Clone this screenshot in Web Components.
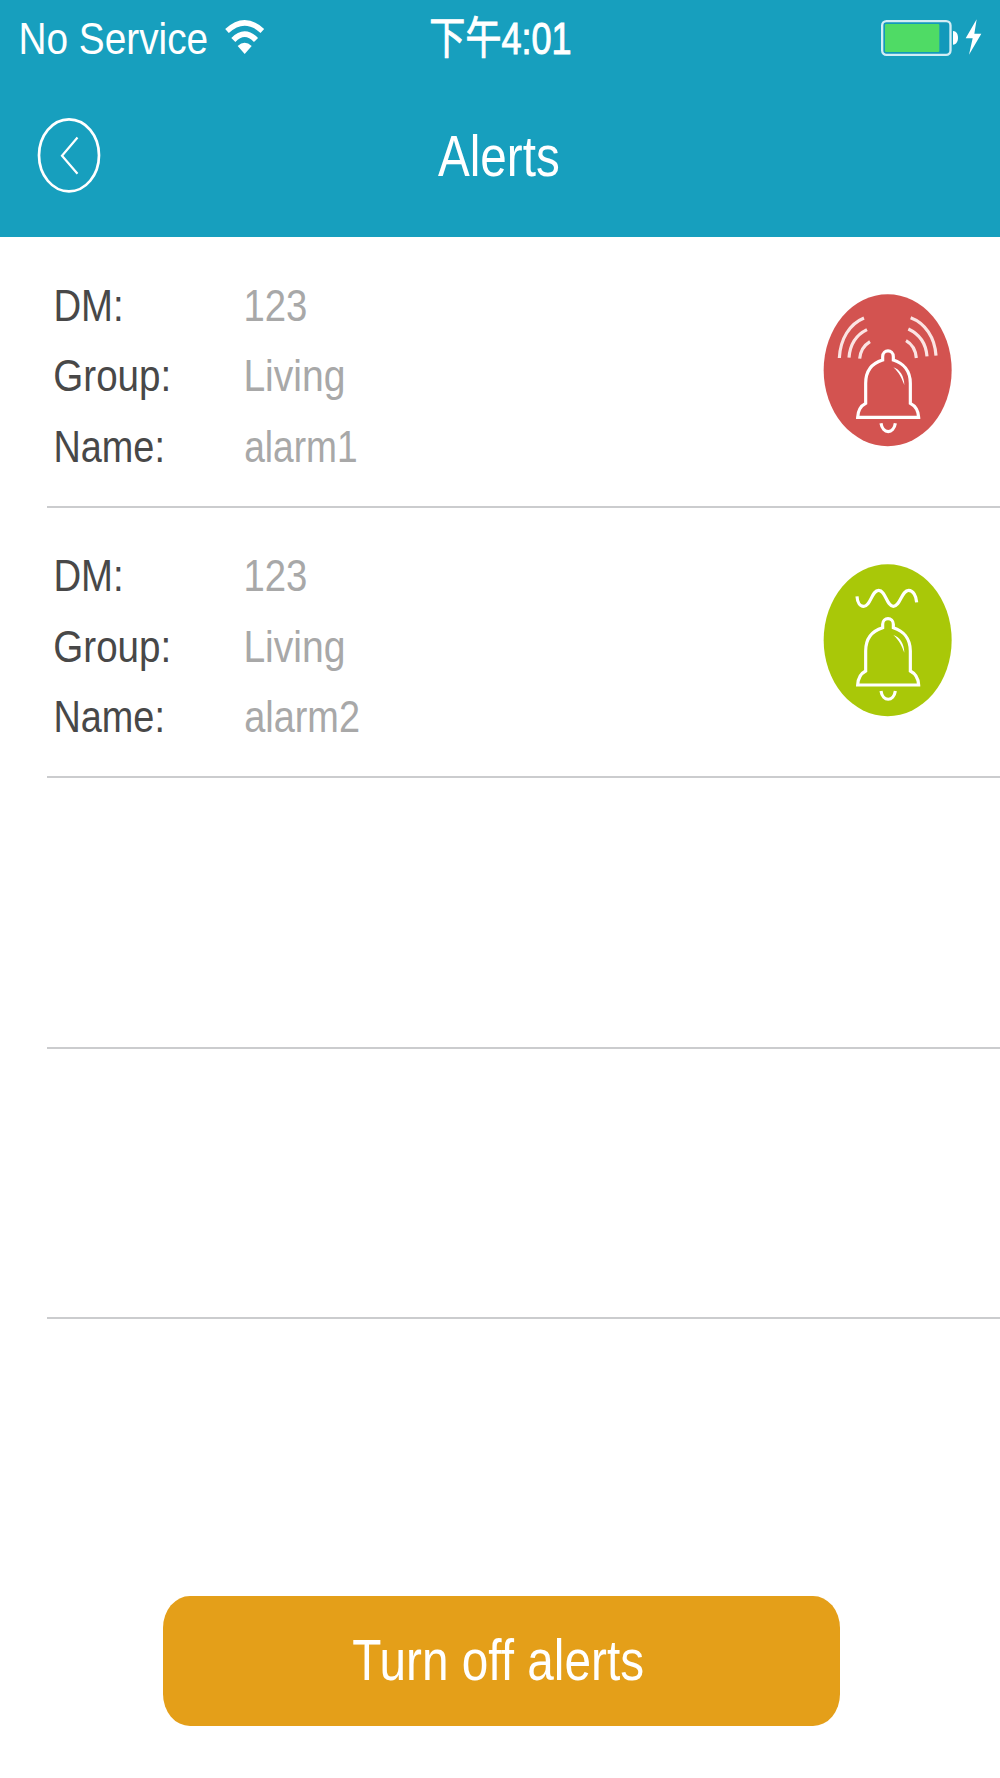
<!DOCTYPE html>
<html lang="en">
<head>
<meta charset="utf-8">
<title>Alerts</title>
<style>
html, body { margin: 0; background: #fff; }
body { font-family: "Liberation Sans", "Noto Sans CJK SC", sans-serif; }
</style>
</head>
<body>
<alerts-screen></alerts-screen>
<script>
const define = (name, html, setup) => {
  const t = document.createElement('template');
  t.innerHTML = html;
  customElements.define(name, class extends HTMLElement {
    connectedCallback() {
      if (this.shadowRoot) return;
      const root = this.attachShadow({ mode: 'open' });
      root.append(t.content.cloneNode(true));
      if (setup) setup(this, root);
    }
  });
};

/* Condensed label: squeezes its glyphs so that their ink spans `ink` pixels. */
const ctx = document.createElement('canvas').getContext('2d');
define('narrow-text', `
<style>
:host { display: flex; flex: none; }
span { display: block; flex: none; white-space: pre; transform-origin: 0 0; }
</style><span></span>`, (el, root) => {
  const span = root.querySelector('span');
  const text = el.getAttribute('text');
  const ink = +el.getAttribute('ink');
  span.textContent = text;
  const cs = getComputedStyle(el);
  ctx.font = `${cs.fontWeight} ${cs.fontSize} ${cs.fontFamily}`;
  const m = ctx.measureText(text);
  const k = ink / (m.actualBoundingBoxLeft + m.actualBoundingBoxRight);
  el.style.width = ink + 'px';
  span.style.transform = `translateX(${m.actualBoundingBoxLeft * k}px) scaleX(${k})`;
});

define('wifi-icon', `
<style>:host{display:block} svg{display:block}</style>
<svg width="40" height="36" viewBox="675 57 120 108" fill="none" stroke="#fff">
<path d="M681 93Q734 44 787 93" stroke-width="16"/>
<path d="M700 120Q734 85 768 120" stroke-width="17"/>
<path d="M713 138Q734 118 755 138L734 162Z" fill="#fff" stroke="none"/>
</svg>`);

define('battery-icon', `
<style>:host{display:block} svg{display:block}</style>
<svg width="105" height="40" viewBox="60 54 315 120">
<rect x="66.5" y="63.5" width="205" height="101" rx="13" fill="#1299bb" stroke="#d3edf5" stroke-width="7"/>
<rect x="75" y="72" width="163" height="84" rx="3" fill="#4fdb65"/>
<path d="M279 93C289 93 294 102 294 113.500S289 134 279 134Z" fill="#fff"/>
<path d="M350 58L317 115H338L327 164L364 101H343Z" fill="#fff"/>
</svg>`);

define('status-bar', `
<style>
:host { display: flex; height: 75px; line-height: 77px; font-size: 44.7px; color: #fff; }
.left, .right { flex: 1; display: flex; align-items: flex-start; }
.left { flex: 0 0 430.7px; box-sizing: border-box; padding-left: 21.3px; gap: 18.7px; }
.right { justify-content: flex-end; padding-right: 15px; }
wifi-icon { margin-top: 19px; } battery-icon { margin-top: 18px; }
.time { font-size: 44px; line-height: 78px; -webkit-text-stroke: 1px #fff; }
</style>
<div class="left"><narrow-text text="No Service" ink="185.5"></narrow-text><wifi-icon></wifi-icon></div>
<narrow-text class="time" text="下午4:01" ink="139.3"></narrow-text>
<div class="right"><battery-icon></battery-icon></div>`);

define('back-button', `
<style>:host{display:block} svg{display:block}</style>
<svg width="64" height="76" viewBox="0 0 64 76" fill="none" stroke="#fff">
<ellipse cx="32" cy="38.300" rx="30" ry="36" stroke-width="2.700"/>
<path d="M40.500 20.500L25 38.800L40.500 56.800" stroke-width="2.200"/>
</svg>`);

define('nav-bar', `
<style>
:host { display: flex; height: 162px; font-size: 56.5px; line-height: 163px; color: #fff; }
.side { flex: 1; padding: 42px 0 0 36.7px; }
.end { flex: 1; padding-left: 39.3px; }
</style>
<div class="side"><back-button></back-button></div>
<slot></slot>
<div class="end"></div>`);

const BELL = `
<path d="M143 412H326C325 393 315 377 301 370V310C301 272 279 249 250 240V230C250 207 218 207 218 230V240C188 249 167 272 167 310V370C153 377 144 393 143 412Z"/>
<path d="M213 430C218 463 251 463 256 430"/>
<path d="M250 262C269 267 283 290 283 315C276 297 268 278 250 262Z" fill="#fff" stroke="none"/>`;

define('alarm-badge', `
<style>:host{display:block} svg{display:block}</style>
<svg width="155" height="180" viewBox="0 0 465 540" fill="none" stroke="#fff" stroke-width="9.500"></svg>`, (el, root) => {
  const ringing = el.getAttribute('state') === 'ringing';
  root.querySelector('svg').innerHTML = `
<ellipse cx="233" cy="270.500" rx="192" ry="228" fill="${ringing ? '#d35350' : '#a9c808'}" stroke="none"/>` + (ringing ? `
<g stroke="#fbe4e3"><path d="M88 234C91 176 119 132 162 114M117 233C120 194 140 164 171 149M149 236C151 215 162 196 180 185"/>
<path d="M378 227C375 172 345 129 302 113M351 229C348 191 327 162 295 147M319 234C317 211 306 192 288 182"/></g>
<g>${BELL}</g>` : `
<path d="M141 139C142 157 150 169 161 169C182 169 185 121 206 121C227 121 230 169 250 169C271 169 275 121 296 121C310 121 319 139 320 157"/>
<g transform="translate(0 -7)">${BELL}</g>`);
});

define('alert-row', `
<style>
:host { display: flex; box-sizing: border-box; height: 270.3px; margin-left: 47px; border-bottom: 2px solid #cbccce; }
.fields { flex: 1; padding: 33.3px 0 0 8px; font-size: 44.7px; line-height: 70.4px; }
.f { display: flex; height: 70.4px; }
.k { box-sizing: border-box; width: 190.2px; color: #484848; } .v { color: #a8a8a8; }
.in { padding-left: 1.2px; }
alarm-badge { margin: 42.5px 35px 0 0; }
</style>`, (el, root) => {
  const name = el.getAttribute('name');
  if (!name) return;
  const field = (k, kw, kin, v, vw, vin) => `
<div class="f"><div class="k ${kin}"><narrow-text text="${k}" ink="${kw}"></narrow-text></div>
<div class="v ${vin}"><narrow-text text="${v}" ink="${vw}"></narrow-text></div></div>`;
  const box = document.createElement('div');
  box.className = 'fields';
  root.append(box);
  box.innerHTML =
    field('DM:', 64.7, 'in', el.getAttribute('dm'), 59.8, 'in') +
    field('Group:', 113.3, '', el.getAttribute('group'), 97, 'in') +
    field('Name:', 106, 'in', name, el.getAttribute('name-ink'), '');
  const badge = document.createElement('alarm-badge');
  badge.setAttribute('state', el.getAttribute('state'));
  root.append(badge);
});

define('action-button', `
<style>
:host { display: flex; justify-content: center; box-sizing: border-box; width: 677.6px; height: 129.7px; padding-right: 6px;
  border-radius: 27px / 32px; background: #e49f19; color: #fff; font-size: 56.5px; line-height: 129.5px; }
</style><slot></slot>`);

define('alerts-screen', `
<style>
:host { display: flex; flex-direction: column; height: 1778px; width: 1000px; overflow: hidden; }
header { background: #179fbe; height: 237px; flex: none; }
main { flex: 1; padding-top: .7px; }
footer { display: flex; padding: 0 0 52.3px 162.7px; }
</style>
<header>
  <status-bar></status-bar>
  <nav-bar><narrow-text text="Alerts" ink="120.7"></narrow-text></nav-bar>
</header>
<main>
  <alert-row dm="123" group="Living" name="alarm1" name-ink="111" state="ringing"></alert-row>
  <alert-row dm="123" group="Living" name="alarm2" name-ink="113.4" state="quiet"></alert-row>
  <alert-row></alert-row>
  <alert-row></alert-row>
</main>
<footer><action-button><narrow-text text="Turn off alerts" ink="290"></narrow-text></action-button></footer>`);
</script>
</body>
</html>
